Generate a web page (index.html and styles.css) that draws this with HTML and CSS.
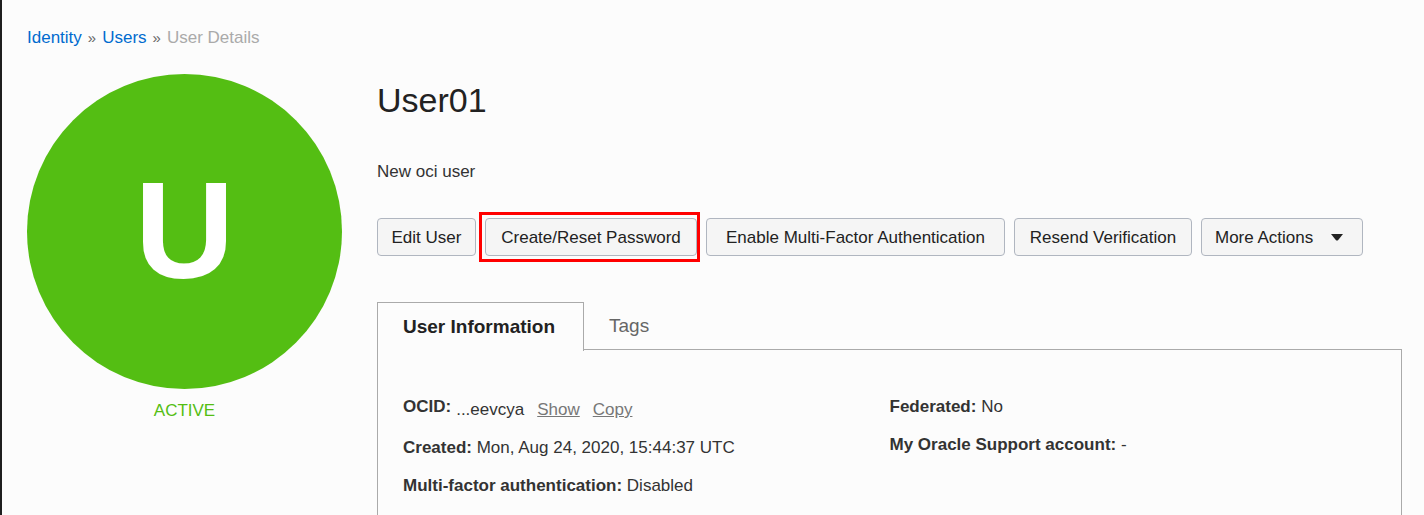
FILE: index.html
```html
<!DOCTYPE html>
<html lang="en">
<head>
<meta charset="utf-8">
<title>User Details</title>
<link rel="stylesheet" href="styles.css">
</head>
<body>
<div class="page">
  <nav class="breadcrumb" aria-label="Breadcrumb">
    <a href="#identity">Identity</a>
    <span class="separator">»</span>
    <a href="#users">Users</a>
    <span class="separator">»</span>
    <span class="current">User Details</span>
  </nav>
  <div class="layout">
    <aside class="status">
      <div class="avatar">U</div>
      <p class="state">ACTIVE</p>
    </aside>
    <main class="details">
      <h1 class="title">User01</h1>
      <p class="description">New oci user</p>
      <div class="actions">
        <button type="button" class="button">Edit User</button>
        <button type="button" class="button highlighted">Create/Reset Password</button>
        <button type="button" class="button">Enable Multi-Factor Authentication</button>
        <button type="button" class="button">Resend Verification</button>
        <button type="button" class="button menu-button">More Actions
          <svg class="caret" viewBox="0 0 12 7" aria-hidden="true"><path d="M0 0h12L7 6.2Q6 7 5 6.2z"/></svg>
        </button>
      </div>
      <div class="tabs" role="tablist">
        <button type="button" class="tab selected" role="tab" aria-selected="true">User Information</button>
        <button type="button" class="tab" role="tab" aria-selected="false">Tags</button>
      </div>
      <section class="panel" role="tabpanel">
        <div class="column">
          <div class="row ocid"><strong>OCID:</strong>
            <div class="ocid-value"><span>...eevcya</span><a href="#show">Show</a><a href="#copy">Copy</a></div>
          </div>
          <div class="row"><strong>Created:</strong> Mon, Aug 24, 2020, 15:44:37 UTC</div>
          <div class="row"><strong>Multi-factor authentication:</strong> Disabled</div>
        </div>
        <div class="column">
          <div class="row"><strong>Federated:</strong> No</div>
          <div class="row"><strong>My Oracle Support account:</strong> -</div>
        </div>
      </section>
    </main>
  </div>
</div>
</body>
</html>
```
FILE: styles.css
```css
* {
  box-sizing: border-box;
}

body {
  margin: 0;
  background: #fcfcfc;
  color: #333;
  font: 17px/22px "Liberation Sans", Arial, sans-serif;
}

h1, p {
  margin: 0;
}

.page {
  min-height: 100vh;
  padding: 27px 22px 0 25px;
  border-left: 2px solid #1f1f1f;
}

.breadcrumb {
  display: flex;
  gap: 6px;
}

.breadcrumb a {
  color: #006bcf;
  text-decoration: none;
}

.separator {
  color: #666;
  font-size: 15px;
}

.current {
  color: #aaa;
}

.layout {
  display: grid;
  grid-template-columns: 315px 1fr;
  gap: 35px;
  margin-top: 25px;
}

.avatar {
  display: flex;
  align-items: center;
  justify-content: center;
  aspect-ratio: 1;
  padding-bottom: 3px;
  border-radius: 50%;
  background: #54be13;
  color: #fff;
  font-size: 138px;
  font-weight: bold;
  line-height: 1;
}

.state {
  margin-top: 11px;
  color: #54be13;
  text-align: center;
}

.title {
  margin-top: 6px;
  color: #222;
  font-size: 34px;
  font-weight: normal;
  line-height: 40px;
}

.description {
  margin-top: 41px;
}

.actions {
  display: grid;
  grid-template-columns: 99px 212px 299px 178px 162px;
  gap: 9px;
  margin-top: 35px;
}

.button {
  height: 38px;
  padding: 1px 0 0;
  border: 1px solid #b0b6c0;
  border-radius: 4px;
  background: #f5f5f5;
  color: #222;
  font: inherit;
  white-space: nowrap;
}

.highlighted {
  position: relative;
}

.highlighted::after {
  content: "";
  position: absolute;
  inset: -7px -4px -7px -7px;
  border: 3px solid #f00;
}

.menu-button {
  display: flex;
  align-items: center;
  justify-content: space-between;
  padding: 1px 19px 0 13px;
}

.caret {
  width: 12px;
  height: 7px;
  fill: #222;
}

.tabs {
  display: flex;
  margin-top: 46px;
}

.tab {
  height: 47px;
  padding: 0 24px;
  border: 1px solid transparent;
  border-bottom: 0;
  background: transparent;
  color: #666;
  font: inherit;
  font-size: 19px;
}

.tab.selected {
  z-index: 1;
  margin-bottom: -2px;
  height: 49px;
  padding: 0 28px 0 25px;
  border-color: #aaa;
  background: #fcfcfc;
  color: #222;
  font-weight: bold;
}

.panel {
  display: grid;
  grid-template-columns: 1fr 1fr;
  min-height: 166px;
  padding: 46px 25px 0;
  border: 1px solid #aaa;
  border-bottom: 0;
}

.column {
  display: flex;
  flex-direction: column;
  gap: 16px;
}

.ocid {
  display: flex;
  gap: 5px;
}

.ocid-value {
  display: flex;
  gap: 13px;
  padding-top: 3px;
}

.ocid-value a {
  color: #777;
}
```
